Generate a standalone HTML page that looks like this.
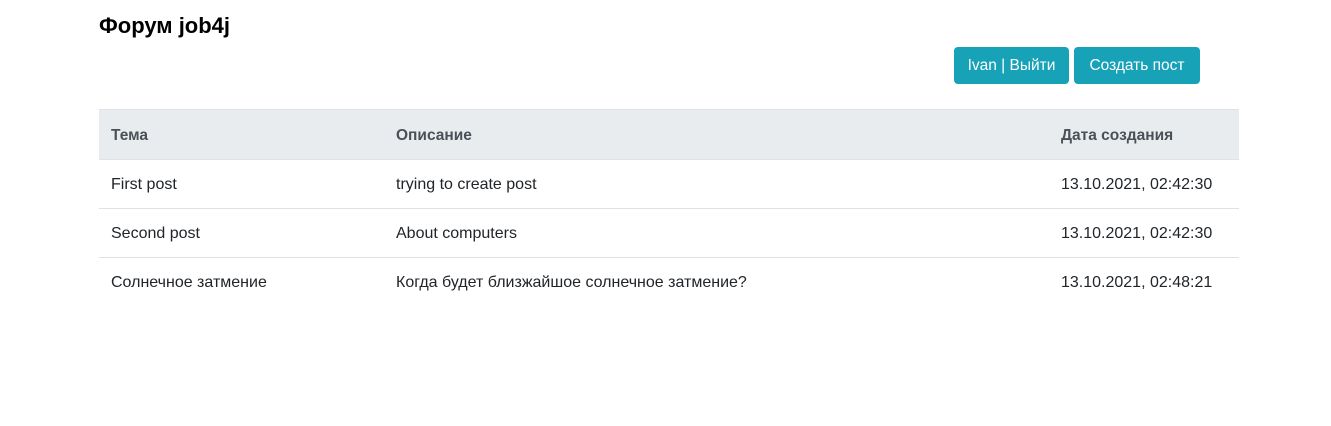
<!DOCTYPE html>
<html><head><meta charset="utf-8"><style>
body{margin:0;background:#fff;font-family:"Liberation Sans",sans-serif;color:#212529;font-size:16px;width:1331px;height:426px;overflow:hidden;position:relative}
h4{position:absolute;left:99px;top:12px;margin:0;font-size:22px;font-weight:bold;color:#000;line-height:28px}
.btn{position:absolute;top:47px;height:37px;background:#17a2b8;color:#fff;border-radius:4px;font-size:15.5px;line-height:38px;text-align:center}
table{position:absolute;left:99px;top:109px;width:1140px;border-collapse:collapse;font-size:16px}
td,th{padding:2px 12px 0;height:46px;border-top:1px solid #dee2e6;text-align:left;vertical-align:middle}
th{background:#e9ecef;color:#495057;font-weight:bold;font-size:15.5px;height:47px;border-bottom:1px solid #dee2e6}
</style></head><body>
<h4>Форум job4j</h4>
<div class="btn" style="left:954px;width:115px">Ivan | Выйти</div>
<div class="btn" style="left:1074px;width:126px">Создать пост</div>
<table>
<tr><th style="width:261px">Тема</th><th style="width:641px">Описание</th><th>Дата создания</th></tr>
<tr><td>First post</td><td>trying to create post</td><td>13.10.2021, 02:42:30</td></tr>
<tr><td>Second post</td><td>About computers</td><td>13.10.2021, 02:42:30</td></tr>
<tr><td>Солнечное затмение</td><td>Когда будет близжайшое солнечное затмение?</td><td>13.10.2021, 02:48:21</td></tr>
</table>
</body></html>
